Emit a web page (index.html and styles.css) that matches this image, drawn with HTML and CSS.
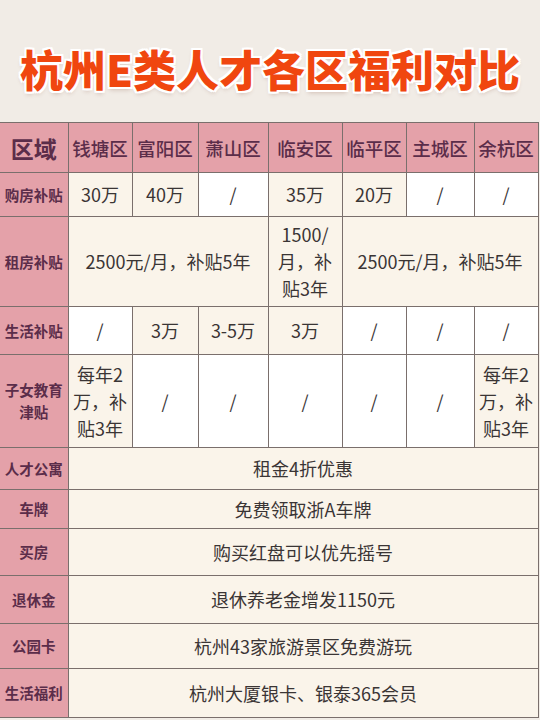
FILE: index.html
```html
<!DOCTYPE html>
<html lang="zh">
<head>
<meta charset="utf-8">
<title>杭州E类人才各区福利对比</title>
<link rel="stylesheet" href="styles.css">
</head>
<body>
<header class="title-bar">
  <h1 class="title">杭州E类人才各区福利对比</h1>
</header>
<table class="grid">
  <colgroup>
    <col class="c0"><col class="c1"><col class="c2"><col class="c3"><col class="c4"><col class="c5"><col class="c6"><col class="c7">
  </colgroup>
  <thead>
    <tr class="r-head">
      <th class="corner">区域</th>
      <th>钱塘区</th><th>富阳区</th><th>萧山区</th><th>临安区</th><th>临平区</th><th>主城区</th><th>余杭区</th>
    </tr>
  </thead>
  <tbody>
    <tr class="r1">
      <th class="label">购房补贴</th>
      <td>30万</td><td>40万</td><td class="w">/</td><td>35万</td><td>20万</td><td class="w">/</td><td class="w">/</td>
    </tr>
    <tr class="r2">
      <th class="label">租房补贴</th>
      <td colspan="3">2500元/月，补贴5年</td>
      <td class="wrap">1500/<br>月，补<br>贴3年</td>
      <td colspan="3">2500元/月，补贴5年</td>
    </tr>
    <tr class="r3">
      <th class="label">生活补贴</th>
      <td class="w">/</td><td>3万</td><td>3-5万</td><td>3万</td><td class="w">/</td><td class="w">/</td><td class="w">/</td>
    </tr>
    <tr class="r4">
      <th class="label">子女教育<br>津贴</th>
      <td class="wrap">每年2<br>万，补<br>贴3年</td>
      <td class="w">/</td><td class="w">/</td><td class="w">/</td><td class="w">/</td><td class="w">/</td>
      <td class="wrap">每年2<br>万，补<br>贴3年</td>
    </tr>
    <tr class="r5"><th class="label">人才公寓</th><td colspan="7">租金4折优惠</td></tr>
    <tr class="r6"><th class="label">车牌</th><td colspan="7">免费领取浙A车牌</td></tr>
    <tr class="r7"><th class="label">买房</th><td colspan="7">购买红盘可以优先摇号</td></tr>
    <tr class="r8"><th class="label">退休金</th><td colspan="7">退休养老金增发1150元</td></tr>
    <tr class="r9"><th class="label">公园卡</th><td colspan="7">杭州43家旅游景区免费游玩</td></tr>
    <tr class="r10"><th class="label">生活福利</th><td colspan="7">杭州大厦银卡、银泰365会员</td></tr>
  </tbody>
</table>
</body>
</html>
```

FILE: styles.css
```css
html, body {
  margin: 0;
  padding: 0;
  background: #f1ece6;
}
body {
  width: 540px;
  height: 720px;
  overflow: hidden;
  font-family: "Noto Sans CJK SC", "Noto Sans", sans-serif;
}
.title-bar {
  height: 122px;
  display: flex;
  align-items: center;
  justify-content: center;
}
.title {
  margin: 0;
  padding-top: 14px;
  font-size: 43px;
  line-height: 1;
  font-weight: 900;
  white-space: nowrap;
  color: #f0460f;
  text-shadow:
    2px 0 0 #fff, -2px 0 0 #fff, 0 2px 0 #fff, 0 -2px 0 #fff,
    2px 2px 0 #fff, -2px -2px 0 #fff, 2px -2px 0 #fff, -2px 2px 0 #fff,
    0 3px 4px rgba(120, 60, 40, 0.25);
}
.grid {
  width: 538px;
  border-collapse: collapse;
  table-layout: fixed;
  border-top: 1px solid #7a6f6c;
}
.c0 { width: 68px; }
.c1 { width: 64px; }
.c2 { width: 66px; }
.c3 { width: 70px; }
.c4 { width: 74px; }
.c5 { width: 64px; }
.c6 { width: 68px; }
.c7 { width: 64px; }
.grid th, .grid td {
  border: 1px solid #7a6f6c;
  padding: 0 4px;
  text-align: center;
  vertical-align: middle;
}
.grid td {
  background: #faf4ea;
  color: #3a3535;
  font-size: 18px;
  line-height: 27px;
  font-weight: 400;
  white-space: nowrap;
}
.grid td.w {
  background: #ffffff;
}
.grid td.wrap {
  padding: 0 2px;
}
.grid th {
  background: #e4a1a9;
  color: #5b2d4a;
}
.r-head th {
  font-size: 18.5px;
  font-weight: 500;
  padding: 0;
  height: 49px;
}
.r-head th.corner {
  font-size: 23px;
  font-weight: 700;
}
.grid th.label {
  font-size: 14.5px;
  font-weight: 700;
  line-height: 22px;
  padding: 0 2px;
  white-space: nowrap;
}
.grid th:first-child, .grid td:first-child {
  border-left: none;
}
.r1 th, .r1 td { height: 43px; }
.r2 th, .r2 td { height: 89px; }
.r3 th, .r3 td { height: 47px; }
.r4 th, .r4 td { height: 92px; }
.r5 th, .r5 td { height: 41px; }
.r6 th, .r6 td { height: 38px; }
.r7 th, .r7 td { height: 46px; }
.r8 th, .r8 td { height: 47px; }
.r9 th, .r9 td { height: 44px; }
.r10 th, .r10 td { height: 48px; }
```
